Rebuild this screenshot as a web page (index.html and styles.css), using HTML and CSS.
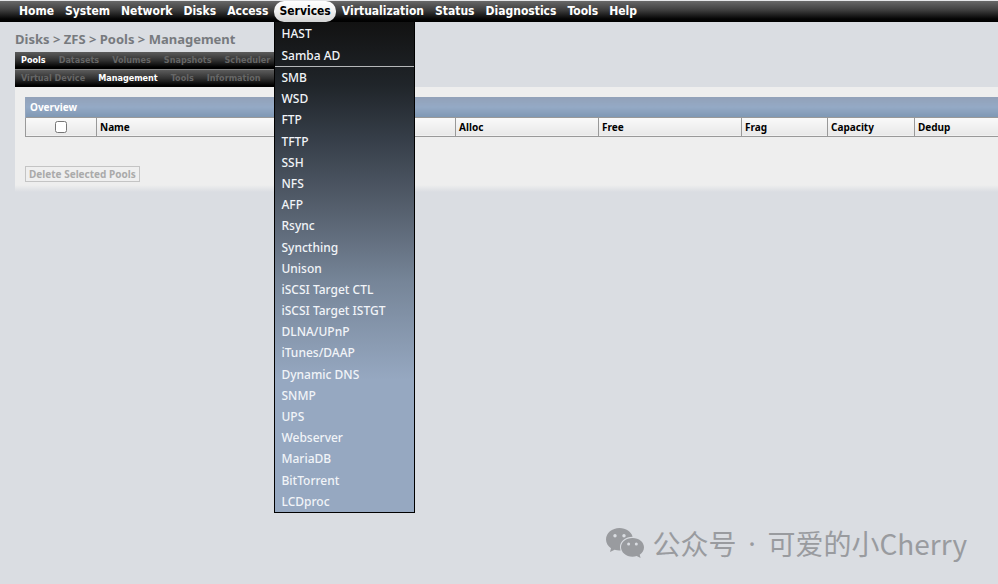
FILE: index.html
```html
<!DOCTYPE html>
<html lang="en">
<head>
<meta charset="utf-8">
<title>Disks &gt; ZFS &gt; Pools &gt; Management</title>
<link rel="stylesheet" href="styles.css">
</head>
<body>
<nav class="menubar">
  <ul class="menubar-list">
    <li><a href="#">Home</a></li>
    <li><a href="#">System</a></li>
    <li><a href="#">Network</a></li>
    <li><a href="#">Disks</a></li>
    <li><a href="#">Access</a></li>
    <li class="open"><a href="#">Services</a>
      <div class="dropdown">
        <ul class="dropdown-group dropdown-head">
          <li><a href="#">HAST</a></li>
          <li><a href="#">Samba AD</a></li>
        </ul>
        <ul class="dropdown-group dropdown-services">
          <li><a href="#">SMB</a></li>
          <li><a href="#">WSD</a></li>
          <li><a href="#">FTP</a></li>
          <li><a href="#">TFTP</a></li>
          <li><a href="#">SSH</a></li>
          <li><a href="#">NFS</a></li>
          <li><a href="#">AFP</a></li>
          <li><a href="#">Rsync</a></li>
          <li><a href="#">Syncthing</a></li>
          <li><a href="#">Unison</a></li>
          <li><a href="#">iSCSI Target CTL</a></li>
          <li><a href="#">iSCSI Target ISTGT</a></li>
          <li><a href="#">DLNA/UPnP</a></li>
          <li><a href="#">iTunes/DAAP</a></li>
          <li><a href="#">Dynamic DNS</a></li>
          <li><a href="#">SNMP</a></li>
          <li><a href="#">UPS</a></li>
          <li><a href="#">Webserver</a></li>
          <li><a href="#">MariaDB</a></li>
          <li><a href="#">BitTorrent</a></li>
          <li><a href="#">LCDproc</a></li>
        </ul>
      </div>
    </li>
    <li><a href="#">Virtualization</a></li>
    <li><a href="#">Status</a></li>
    <li><a href="#">Diagnostics</a></li>
    <li><a href="#">Tools</a></li>
    <li><a href="#">Help</a></li>
  </ul>
</nav>
<main class="page">
  <h1 class="path">Disks &gt; ZFS &gt; Pools &gt; Management</h1>
  <div class="tabs">
    <a class="active" href="#">Pools</a>
    <a href="#">Datasets</a>
    <a href="#">Volumes</a>
    <a href="#">Snapshots</a>
    <a href="#">Scheduler</a>
  </div>
  <div class="tabs tabs-sub">
    <a href="#">Virtual Device</a>
    <a class="active" href="#">Management</a>
    <a href="#">Tools</a>
    <a href="#">Information</a>
  </div>
  <form class="panel">
    <table class="pools">
      <colgroup><col class="c-check"><col class="c-name"><col class="c-size"><col class="c-size"><col class="c-frag"><col class="c-cap"><col></colgroup>
      <thead>
        <tr class="title"><th colspan="7">Overview</th></tr>
        <tr class="heads">
          <th class="check"><input type="checkbox" aria-label="Select all pools"></th>
          <th>Name</th><th>Alloc</th><th>Free</th><th>Frag</th><th>Capacity</th><th>Dedup</th>
        </tr>
      </thead>
    </table>
    <button class="delete" type="button" disabled>Delete Selected Pools</button>
  </form>
</main>
<div class="watermark">
  <svg viewBox="0 0 38 32" width="38" height="32" aria-hidden="true">
    <path fill="#999b9f" d="M13.500 1C6 1 0 6 0 12.500c0 3.600 2 6.700 5 8.800L4 25l4.600-2.300c1.600.5 3.200.7 5 .7h1A11 11 0 0 1 14 20c0-6 5.600-10.300 12.600-10.300C25.300 4.600 20 1 13.500 1z"/>
    <path fill="#999b9f" d="M26.500 11C20 11 15 15.200 15 20.300s5 9.400 11.500 9.400c1.500 0 2.900-.2 4.200-.6l3.900 2-.9-3.300c2.600-1.700 4.300-4.400 4.300-7.500C38 15.200 33 11 26.500 11z"/>
    <g fill="#dadde2"><circle cx="9" cy="8.700" r="1.700"/><circle cx="18" cy="8.700" r="1.700"/><circle cx="22.600" cy="17" r="1.500"/><circle cx="30.300" cy="17" r="1.500"/></g>
  </svg>
  <span>公众号</span><span class="dot">·</span><span>可爱的小Cherry</span>
</div>
</body>
</html>
```
FILE: styles.css
```css
* { box-sizing: border-box; }
body {
  margin: 0;
  min-height: 100vh;
  position: relative;
  overflow-x: hidden;
  background: #dadde2;
  color: #000;
  font-family: "Noto Sans", sans-serif;
  font-size: 11px;
}
a { color: inherit; text-decoration: none; }
ul { margin: 0; padding: 0; list-style: none; }

.menubar {
  height: 22px;
  border-top: 1px solid #e4e5e7;
  background: linear-gradient(#686868, #3c3c3c 45%, #050505 85%, #000);
  color: #fff;
  font-family: "DejaVu Sans Condensed", "DejaVu Sans", sans-serif;
  font-size: 12px;
  font-weight: bold;
}
.menubar-list { display: flex; gap: 1px; padding-left: 14px; }
.menubar-list > li { position: relative; }
.menubar-list > li > a { display: block; padding: 0 5px; line-height: 21px; }
.menubar-list > .open > a {
  border-radius: 10px;
  background: linear-gradient(#fff, #f4f4f4 40%, #d4d4d4);
  color: #000;
}

.dropdown {
  position: absolute;
  top: 21px;
  left: 0;
  z-index: 2;
  width: 141px;
  border: 1px solid #000;
  border-top: 0;
  background: linear-gradient(#121212, #20252a 13%, #343c46 23%, #555f6d 38%, #768598 53%, #96a8c1 73%, #96a8c1);
  color: #f1f4f8;
  font-family: "Noto Sans", sans-serif;
  font-size: 12px;
  font-weight: 500;
}
.dropdown-group { display: grid; grid-auto-rows: 1fr; }
.dropdown-group a { display: block; padding-left: 6px; line-height: 21px; }
.dropdown-head { height: 45px; padding-top: 1px; border-bottom: 1px solid #b5b7b9; }
.dropdown-services { height: 445px; }

.page { padding: 8px 0 0 15px; }
.path {
  margin: 0;
  color: #777a7e;
  font-size: 13px;
  line-height: 19px;
  padding-bottom: 3px;
}
.tabs {
  display: flex;
  gap: 13px;
  width: 300px;
  height: 17px;
  padding-left: 6px;
  background: linear-gradient(#5c5c5c, #303030 50%, #000 90%);
  color: #666;
  font-family: "DejaVu Sans Condensed", "DejaVu Sans", sans-serif;
  font-size: 9px;
  font-weight: bold;
  line-height: 16px;
}
.tabs-sub { height: 18px; line-height: 16px; border-top: 1px solid #888; }
.tabs .active { color: #fff; }

.panel {
  padding: 10px 0 10px 10px;
  background: linear-gradient(#eee, #eee calc(100% - 7px), #dadde2);
}
.pools { width: 100%; table-layout: fixed; border-collapse: collapse; font-size: 10px; }
.c-check { width: 71px; }
.c-name { width: 359px; }
.c-size { width: 143px; }
.c-frag { width: 86px; }
.c-cap { width: 87px; }
.pools th { padding: 0 3px; text-align: left; }
.pools .title th {
  height: 20px;
  padding-left: 4px;
  border-left: 1px solid #94a5bd;
  background: linear-gradient(#92a1b8, #94a9c5 50%, #7f98b4);
  color: #fff;
}
.heads th {
  height: 19px;
  border: 1px solid #999;
  border-right: 0;
  background: linear-gradient(#fafafa, #e8e8e8);
}
.pools .check { text-align: center; }
.check input { display: block; width: 12px; height: 12px; margin: 0 auto; }
.delete {
  display: block;
  height: 16px;
  margin-top: 29px;
  padding: 0 3px;
  border: 1px solid #c4c4c4;
  background: #efefef;
  color: #aaa;
  font: bold 10px/14px "Noto Sans", sans-serif;
}

.watermark {
  position: absolute;
  right: 31px;
  bottom: 21px;
  display: flex;
  align-items: center;
  color: #999b9f;
  font: 28px/40px "Noto Sans CJK SC", sans-serif;
}
.watermark svg { margin-right: 8px; }
.watermark .dot { width: 31px; text-align: center; font-family: "Noto Sans", sans-serif; }
```
